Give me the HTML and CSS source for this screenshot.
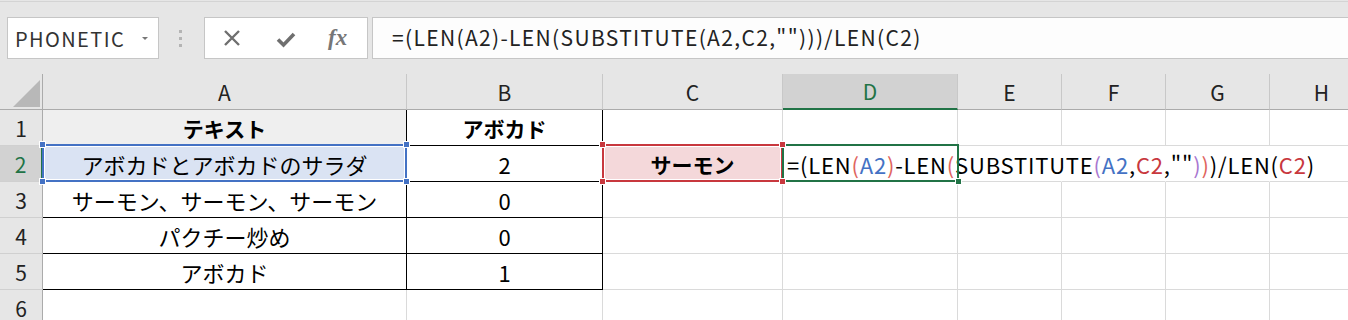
FILE: index.html
```html
<!DOCTYPE html>
<html lang="ja">
<head>
    <meta charset="UTF-8">
    <title>LEN SUBSTITUTE</title>
    <link rel="stylesheet" href="styles.css">
</head>
<body>
    <div class="toolbar">
        <div class="namebox">
            <span class="name">PHONETIC</span>
            <span class="arrow"></span>
        </div>
        <div class="grip"><i></i><i></i><i></i></div>
        <div class="fbuttons">
            <svg class="icon-x" width="18" height="16" viewBox="0 0 18 16">
                <path d="M2 1 L16 15 M16 1 L2 15" stroke="#6f6f6f" stroke-width="2.4" fill="none"/>
            </svg>
            <svg class="icon-check" width="20" height="17" viewBox="0 0 20 17">
                <path d="M2 8.5 L7.5 14 L18 3" stroke="#6f6f6f" stroke-width="3.6" fill="none"/>
            </svg>
            <span class="fx">fx</span>
        </div>
        <div class="formula">=(LEN(A2)-LEN(SUBSTITUTE(A2,C2,"")))/LEN(C2)</div>
    </div>

    <div class="sheet">
        <div class="corner"><span class="tri"></span></div>
        <div class="colhead">A</div>
        <div class="colhead">B</div>
        <div class="colhead">C</div>
        <div class="colhead active">D</div>
        <div class="colhead">E</div>
        <div class="colhead">F</div>
        <div class="colhead">G</div>
        <div class="colhead">H</div>

        <div class="rowhead">1</div>
        <div class="cell tbl title gray">テキスト</div>
        <div class="cell tbl title">アボカド</div>
        <div class="cell"></div>
        <div class="cell"></div>
        <div class="cell"></div>
        <div class="cell"></div>
        <div class="cell"></div>
        <div class="cell"></div>

        <div class="rowhead active">2</div>
        <div class="cell tbl ref-blue">
            アボカドとアボカドのサラダ
            <span class="refbox blue"><i class="h tl"></i><i class="h tr"></i><i class="h bl"></i><i class="h br"></i></span>
        </div>
        <div class="cell tbl">2</div>
        <div class="cell ref-red title">
            サーモン
            <span class="refbox red"><i class="h tl"></i><i class="h tr"></i><i class="h bl"></i><i class="h br"></i></span>
        </div>
        <div class="cell editing">
            <span class="edit-text">=(LEN<span class="p2">(</span><span class="rb">A2</span><span class="p2">)</span>-LEN<span class="p2">(</span>SUBSTITUTE<span class="p3">(</span><span class="rb">A2</span>,<span class="rr">C2</span>,""<span class="p3">)</span><span class="p2">)</span>)/LEN(<span class="rr">C2</span>)</span><span class="caret"></span>
            <span class="activebox"><i class="h br"></i></span>
        </div>
        <div class="cell under"></div>
        <div class="cell under"></div>
        <div class="cell under"></div>
        <div class="cell under"></div>

        <div class="rowhead">3</div>
        <div class="cell tbl">サーモン、サーモン、サーモン</div>
        <div class="cell tbl">0</div>
        <div class="cell"></div>
        <div class="cell"></div>
        <div class="cell"></div>
        <div class="cell"></div>
        <div class="cell"></div>
        <div class="cell"></div>

        <div class="rowhead">4</div>
        <div class="cell tbl">パクチー炒め</div>
        <div class="cell tbl">0</div>
        <div class="cell"></div>
        <div class="cell"></div>
        <div class="cell"></div>
        <div class="cell"></div>
        <div class="cell"></div>
        <div class="cell"></div>

        <div class="rowhead">5</div>
        <div class="cell tbl">アボカド</div>
        <div class="cell tbl">1</div>
        <div class="cell"></div>
        <div class="cell"></div>
        <div class="cell"></div>
        <div class="cell"></div>
        <div class="cell"></div>
        <div class="cell"></div>

        <div class="rowhead">6</div>
        <div class="cell"></div>
        <div class="cell"></div>
        <div class="cell"></div>
        <div class="cell"></div>
        <div class="cell"></div>
        <div class="cell"></div>
        <div class="cell"></div>
        <div class="cell"></div>
    </div>
</body>
</html>
```

FILE: styles.css
```css
html, body {
    margin: 0;
    overflow: hidden;
}

body {
    background: #e6e6e6;
    font-family: "Noto Sans CJK JP", sans-serif;
    padding-top: 1px;
}

/* formula bar */

.toolbar {
    display: flex;
    align-items: flex-start;
    height: 73px;
    box-sizing: border-box;
    border-top: 1px solid #d4d4d4;
    padding-top: 15px;
}

.namebox {
    display: flex;
    align-items: center;
    width: 152px;
    height: 42px;
    margin-left: 7px;
    box-sizing: border-box;
    border: 1px solid #c6c6c6;
    background: #fff;
}

.name {
    padding-left: 7px;
    font-size: 20px;
    letter-spacing: 1.4px;
    color: #333;
}

.arrow {
    margin-left: auto;
    margin-right: 10px;
    width: 0;
    height: 0;
    border-left: 3px solid transparent;
    border-right: 3px solid transparent;
    border-top: 3px solid #777;
}

.grip {
    display: flex;
    flex-direction: column;
    gap: 4px;
    margin-left: 20px;
    margin-top: 13px;
}

.grip i {
    width: 3px;
    height: 3px;
    background: #b4b4b4;
}

.fbuttons {
    display: flex;
    align-items: center;
    width: 164px;
    height: 42px;
    margin-left: 22px;
    box-sizing: border-box;
    border: 1px solid #c6c6c6;
    background: #fff;
}

.icon-x {
    margin-left: 18px;
}

.icon-check {
    margin-left: 35px;
    margin-top: 2px;
}

.fx {
    margin-left: 32px;
    font-family: "Liberation Serif", serif;
    font-style: italic;
    font-weight: bold;
    font-size: 23px;
    color: #777;
}

.formula {
    flex: 1;
    height: 42px;
    margin-left: 4px;
    margin-right: -2px;
    box-sizing: border-box;
    border: 1px solid #c6c6c6;
    background: #fdfdfd;
    padding-left: 19px;
    font-size: 21px;
    line-height: 38px;
    letter-spacing: 1.35px;
    color: #222;
    white-space: nowrap;
}

/* sheet */

.sheet {
    display: grid;
    grid-template-columns: 43px 364px 196px 180px 175px 104px 104px 104px 104px;
    grid-auto-rows: 36px;
    width: max-content;
    background: #fff;
}

.corner {
    display: flex;
    justify-content: flex-end;
    align-items: flex-end;
    padding: 0 2px 2px 0;
    background: #e6e6e6;
    border-right: 1px solid #ababab;
    border-bottom: 1px solid #ababab;
}

.tri {
    width: 27px;
    height: 27px;
    background: #b8b8b8;
    clip-path: polygon(100% 0, 100% 100%, 0 100%);
}

.colhead, .rowhead, .cell {
    box-sizing: border-box;
    display: flex;
    align-items: center;
    justify-content: center;
    font-size: 21px;
}

.cell {
    font-size: 22px;
}

.colhead {
    background: #e6e6e6;
    border-right: 1px solid #c8c8c8;
    border-bottom: 1px solid #ababab;
    color: #222;
}

.colhead.active {
    background: #d2d2d2;
    color: #217346;
    border-bottom: 2px solid #217346;
}

.rowhead {
    background: #e6e6e6;
    border-right: 1px solid #ababab;
    border-bottom: 1px solid #d0d0d0;
    color: #222;
}

.rowhead.active {
    background: #d2d2d2;
    color: #217346;
    border-right: 2px solid #217346;
}

.cell {
    position: relative;
    border-right: 1px solid #dadada;
    border-bottom: 1px solid #dadada;
    color: #000;
    white-space: nowrap;
}

.cell.tbl {
    border-right-color: #000;
    border-bottom-color: #000;
}

.cell.title {
    font-weight: bold;
    font-size: 21px;
}

.cell.gray {
    background: #efefef;
}

.cell.ref-blue {
    background: #dae3f3;
}

.cell.ref-red {
    background: #f4d8da;
}

.cell.under {
    border-right-color: transparent;
}

/* cell in edit mode */

.cell.editing {
    justify-content: flex-start;
    padding-left: 4px;
}

.edit-text {
    letter-spacing: 0.8px;
}

.p2 { color: #e0645e; }
.p3 { color: #a877d0; }
.rb { color: #4472c4; }
.rr { color: #c8383e; }

.caret {
    display: inline-block;
    width: 1px;
    height: 27px;
    margin-left: 2px;
    background: #000;
}

/* reference boxes and handles */

.refbox, .activebox {
    position: absolute;
    left: -1px;
    top: -2px;
    right: -1px;
    bottom: -1px;
    border: 2px solid;
    box-shadow: inset 0 0 0 1px #fff;
}

.refbox.blue { border-color: #4472c4; }
.refbox.red { border-color: #c8383e; }

.activebox {
    right: -2px;
    border-color: #217346;
    box-shadow: none;
}

.h {
    position: absolute;
    z-index: 3;
    width: 5px;
    height: 5px;
    border: 1px solid #fff;
}

.blue .h { background: #4472c4; }
.red .h { background: #c8383e; }
.activebox .h { background: #217346; }

.h.tl { left: -5px; top: -5px; }
.h.tr { right: -5px; top: -5px; }
.h.bl { left: -5px; bottom: -5px; }
.h.br { right: -5px; bottom: -5px; }
```
